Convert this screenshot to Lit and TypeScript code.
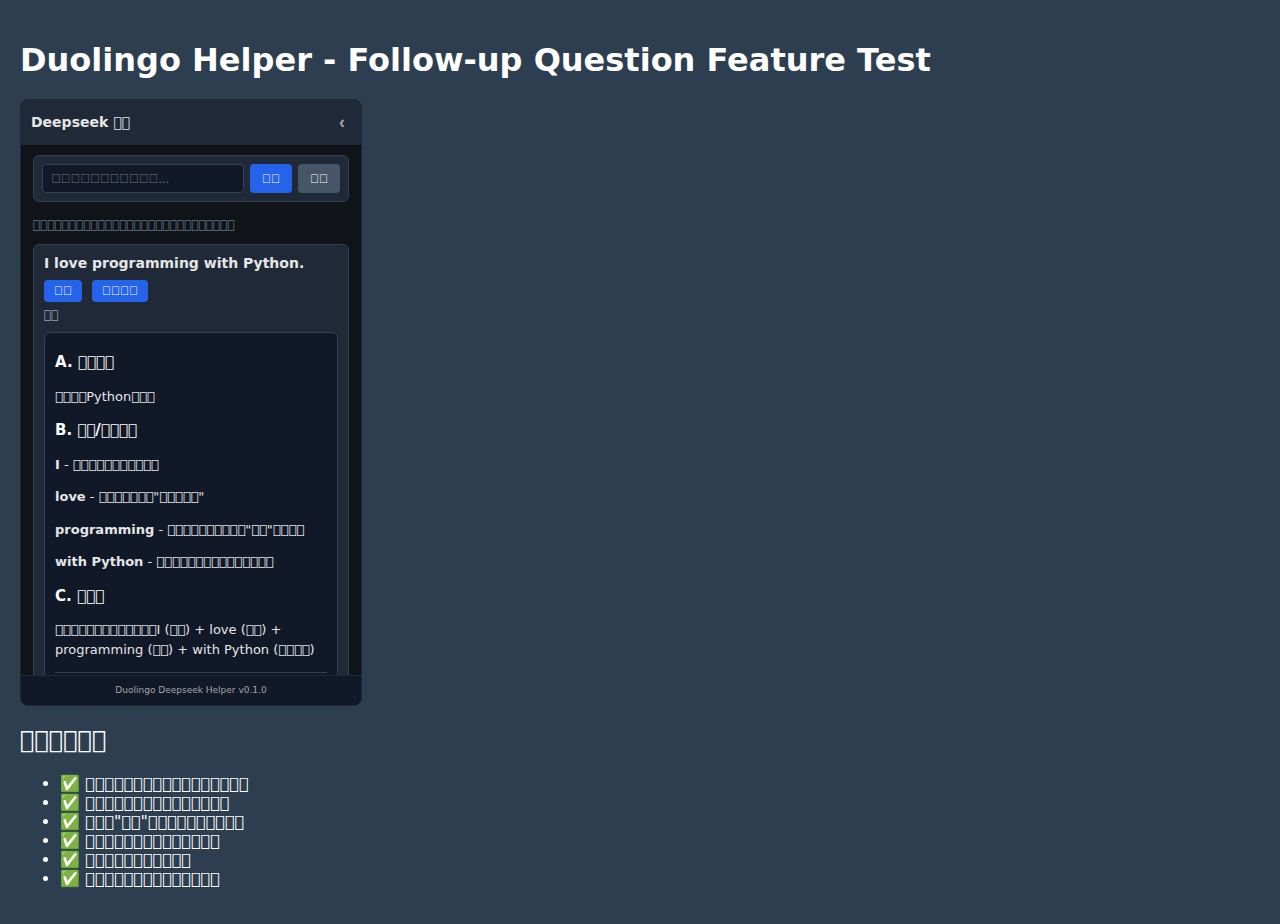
import { LitElement, html, css } from "lit";
import { customElement, state } from "lit/decorators.js";

// A run of n missing-glyph boxes.
const box = (n: number) => "\uE5A0".repeat(n);

const CHECKS = [
  box(17),
  box(15),
  `${box(3)}"${box(2)}"${box(10)}`,
  box(14),
  box(11),
  box(14),
];

const WORDS = [
  { word: "I", note: box(11) },
  { word: "love", note: `${box(7)}"${box(5)}"` },
  { word: "programming", note: `${box(10)}"${box(2)}"${box(4)}` },
  { word: "with Python", note: box(15) },
];

const STRUCTURE = `${box(13)}I (${box(2)}) + love (${box(2)}) + programming (${box(2)}) + with Python (${box(4)})`;

@customElement("helper-panel")
export class HelperPanel extends LitElement {
  @state() private query = "";

  static styles = css`
    :host {
      display: flex;
      flex-direction: column;
      box-sizing: border-box;
      width: 342px;
      max-width: 100%;
      height: 607px;
      overflow: hidden;
      border: 1px solid #1f2937;
      border-radius: 8px;
      background: #101418;
      color: #e6e6e6;
    }
    .header {
      display: flex;
      align-items: center;
      justify-content: space-between;
      padding: 10px;
      background: #1f2937;
      font-size: 14px;
      line-height: 16px;
      font-weight: 600;
    }
    .title {
      padding-bottom: 2px;
    }
    .collapse {
      padding: 0 6px;
      border: 0;
      background: none;
      color: #a6a6a6;
      font: bold 18px/25px "Liberation Sans", sans-serif;
    }
    .scroll {
      flex: 1;
      min-height: 0;
      overflow: hidden;
      padding: 10px 12px;
    }
    .ask {
      display: flex;
      gap: 6px;
      padding: 8px;
      border: 1px solid #334155;
      border-radius: 6px;
      background: #1f2937;
    }
    .input {
      flex: 1;
      min-width: 0;
      box-sizing: border-box;
      height: 29px;
      padding: 0 8px;
      border: 1px solid #334155;
      border-radius: 4px;
      background: #111827;
      color: #e6e6e6;
      font: 13px "Liberation Sans", sans-serif;
    }
    .input::placeholder {
      color: #757575;
    }
    .btn {
      border: 0;
      border-radius: 4px;
      padding: 4px 10px;
      background: #2563eb;
      color: #fff;
      font: 12px/14px "Liberation Sans", sans-serif;
    }
    .ask .btn {
      padding: 0 12px;
    }
    .ask .muted {
      background: #475569;
    }
    .hint {
      margin: 16px 0 12px;
      color: #64748b;
      font-size: 12px;
      line-height: 14px;
    }
    .card {
      padding: 10px;
      border: 1px solid #334155;
      border-radius: 6px;
      background: #1f2937;
    }
    .sentence {
      font-size: 14px;
      line-height: 16px;
      font-weight: 600;
    }
    .actions {
      display: flex;
      gap: 10px;
      margin: 9px 0 6px;
    }
    .status {
      color: #94a3b8;
      font-size: 12px;
      line-height: 14px;
    }
    .result {
      display: flow-root;
      margin-top: 10px;
      padding: 0 10px 10px;
      border: 1px solid #334155;
      border-radius: 6px;
      background: #111827;
      font-size: 13px;
      line-height: 1.5;
    }
    .result h3 {
      margin: 8px 0;
      color: #fff;
      font-size: 15px;
    }
    .result h3:first-child {
      margin-top: 18px;
    }
    .result p {
      margin: 13px 0;
    }
    .result hr {
      margin: 13px 0;
      border: 0;
      border-top: 1px solid #334155;
    }
    .footer {
      padding: 8px;
      border-top: 1px solid #1f2937;
      background: #111827;
      color: #a6a6a6;
      font-size: 9px;
      line-height: 13px;
      text-align: center;
    }
  `;

  render() {
    return html`
      <div class="header">
        <span class="title">${`Deepseek ${box(2)}`}</span>
        <button class="collapse" type="button">‹</button>
      </div>
      <div class="scroll">
        <form class="ask" @submit=${(e: Event) => e.preventDefault()}>
          <input
            class="input"
            aria-label=${box(2)}
            placeholder="${box(11)}..."
            .value=${this.query}
            @input=${(e: Event) => (this.query = (e.target as HTMLInputElement).value)}
          />
          <button class="btn">${box(2)}</button>
          <button class="btn muted" type="button" @click=${() => (this.query = "")}>${box(2)}</button>
        </form>
        <p class="hint">${box(28)}</p>
        <section class="card">
          <div class="sentence">I love programming with Python.</div>
          <div class="actions">
            <button class="btn" type="button">${box(2)}</button>
            <button class="btn" type="button">${box(4)}</button>
          </div>
          <div class="status">${box(2)}</div>
          <div class="result">
            <h3>${`A. ${box(4)}`}</h3>
            <p>${`${box(4)}Python${box(3)}`}</p>
            <h3>${`B. ${box(2)}/${box(4)}`}</h3>
            ${WORDS.map((w) => html`<p><strong>${w.word}</strong>${` - ${w.note}`}</p>`)}
            <h3>${`C. ${box(3)}`}</h3>
            <p>${STRUCTURE}</p>
            <hr />
          </div>
        </section>
      </div>
      <div class="footer">Duolingo Deepseek Helper v0.1.0</div>
    `;
  }
}

@customElement("app-root")
export class AppRoot extends LitElement {
  static styles = css`
    :host {
      display: flow-root;
      box-sizing: border-box;
      min-height: 100vh;
      padding: 20px;
      background: #2c3e50;
      color: #fff;
      font-family: "DejaVu Sans", sans-serif;
      font-size: 16px;
    }
    h1 {
      margin: 21px 0 20px;
      font-size: 32px;
      line-height: 38px;
    }
    h2 {
      margin: 20px 0;
      font-size: 24px;
      line-height: 28px;
    }
    ul {
      margin: 0;
      padding-left: 40px;
      line-height: 19px;
    }
  `;

  render() {
    return html`
      <h1>Duolingo Helper - Follow-up Question Feature Test</h1>
      <helper-panel></helper-panel>
      <h2>${box(6)}</h2>
      <ul>
        ${CHECKS.map((c) => html`<li>${`✅ ${c}`}</li>`)}
      </ul>
    `;
  }
}
